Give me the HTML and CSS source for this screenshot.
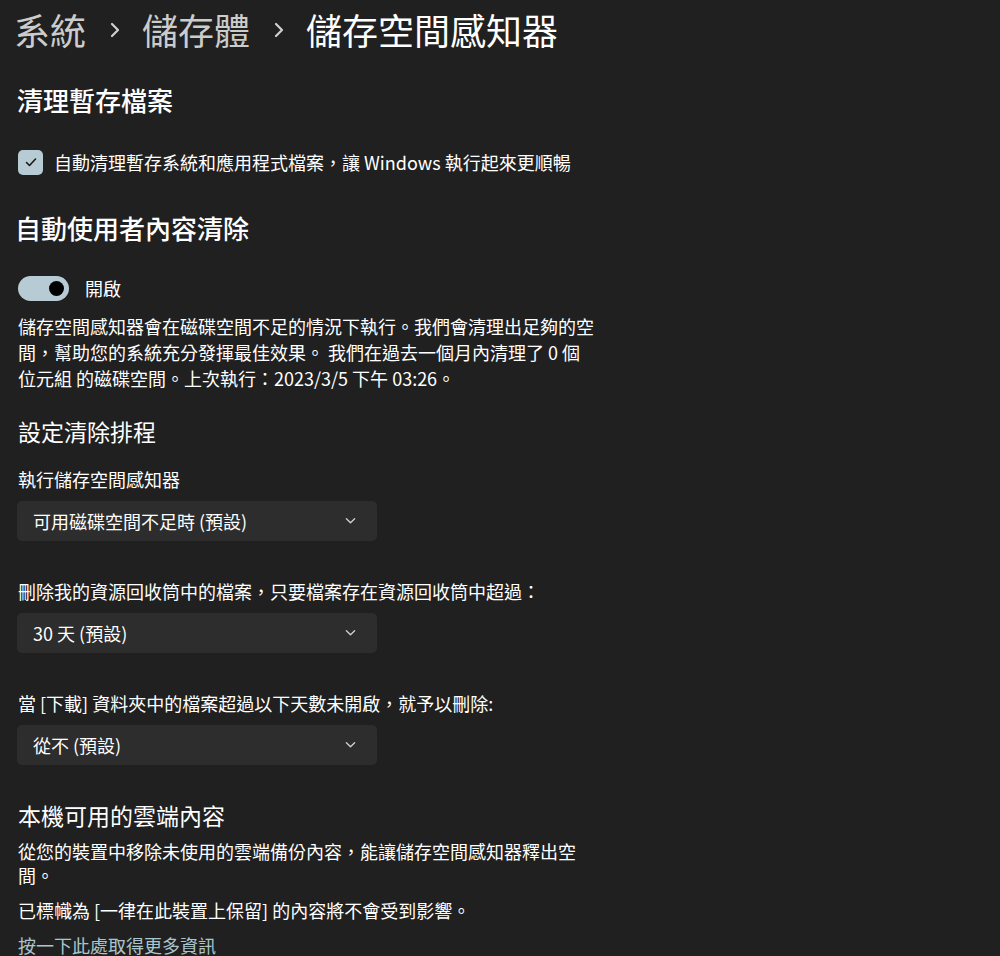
FILE: index.html
```html
<!DOCTYPE html>
<html lang="zh-Hant">
  <head>
    <meta charset="UTF-8" />
    <meta name="viewport" content="width=device-width, initial-scale=1.0"/>
    <title>儲存空間感知器</title>
    <link rel="stylesheet" href="styles.css">
  </head>
  <body>
    <div class="breadcrumb">
      <span class="crumb">系統</span>
      <svg class="sep" viewBox="0 0 10 18"><path d="M2 3 L8 9 L2 15" /></svg>
      <span class="crumb">儲存體</span>
      <svg class="sep" viewBox="0 0 10 18"><path d="M2 3 L8 9 L2 15" /></svg>
      <span class="crumb current">儲存空間感知器</span>
    </div>

    <h2 class="section first">清理暫存檔案</h2>
    <label class="check-row">
      <span class="checkbox">
        <svg viewBox="0 0 16 16"><path d="M3.5 8.5 L6.5 11.5 L12.5 5" /></svg>
      </span>
      自動清理暫存系統和應用程式檔案，讓 Windows 執行起來更順暢
    </label>

    <h2 class="section">自動使用者內容清除</h2>
    <div class="toggle-row">
      <span class="toggle"><span class="knob"></span></span>
      開啟
    </div>
    <p class="desc">儲存空間感知器會在磁碟空間不足的情況下執行。我們會清理出足夠的空間，幫助您的系統充分發揮最佳效果。 我們在過去一個月內清理了 0 個位元組 的磁碟空間。上次執行：2023/3/5 下午 03:26。</p>

    <h3 class="sub">設定清除排程</h3>

    <div class="field first">
      <div class="label">執行儲存空間感知器</div>
      <div class="select">
        <span>可用磁碟空間不足時 (預設)</span>
        <svg viewBox="0 0 12 8"><path d="M1.5 1.5 L6 6 L10.5 1.5" /></svg>
      </div>
    </div>

    <div class="field">
      <div class="label">刪除我的資源回收筒中的檔案，只要檔案存在資源回收筒中超過：</div>
      <div class="select">
        <span>30 天 (預設)</span>
        <svg viewBox="0 0 12 8"><path d="M1.5 1.5 L6 6 L10.5 1.5" /></svg>
      </div>
    </div>

    <div class="field">
      <div class="label">當 [下載] 資料夾中的檔案超過以下天數未開啟，就予以刪除:</div>
      <div class="select">
        <span>從不 (預設)</span>
        <svg viewBox="0 0 12 8"><path d="M1.5 1.5 L6 6 L10.5 1.5" /></svg>
      </div>
    </div>

    <h3 class="sub cloud">本機可用的雲端內容</h3>
    <p class="cloud-text">從您的裝置中移除未使用的雲端備份內容，能讓儲存空間感知器釋出空間。</p>
    <p class="cloud-text note">已標幟為 [一律在此裝置上保留] 的內容將不會受到影響。</p>
    <a class="more" href="#">按一下此處取得更多資訊</a>
  </body>
</html>
```

FILE: styles.css
```css
* {
  margin: 0;
  padding: 0;
  box-sizing: border-box;
}

body {
  background: #202020;
  color: #ffffff;
  font-family: "Noto Sans CJK TC", "Noto Sans", sans-serif;
  font-size: 18px;
  padding: 0 0 0 18px;
  overflow: hidden;
  height: 956px;
}

.breadcrumb {
  display: flex;
  align-items: center;
  height: 58px;
  margin-left: -4px;
  font-size: 36px;
  line-height: 58px;
}

.crumb {
  color: #cccccc;
}

.crumb.current {
  color: #ffffff;
}

.sep {
  width: 10px;
  height: 18px;
  margin: 2px 22px 0 24px;
}

.sep path {
  fill: none;
  stroke: #d0d0d0;
  stroke-width: 2.2;
  stroke-linecap: round;
  stroke-linejoin: round;
}

.section {
  font-size: 26px;
  font-weight: 500;
  line-height: 36px;
  margin-top: 33px;
  margin-left: -3px;
}

.section.first {
  margin-top: 24px;
  margin-left: -1px;
}

.check-row {
  display: flex;
  align-items: center;
  gap: 11px;
  height: 30px;
  margin-top: 29px;
  line-height: 30px;
}

.checkbox {
  width: 25px;
  height: 25px;
  border-radius: 5px;
  background: #b6cbd3;
  display: flex;
  align-items: center;
  justify-content: center;
}

.checkbox svg {
  width: 16px;
  height: 16px;
}

.checkbox path {
  fill: none;
  stroke: #1a1a1a;
  stroke-width: 1.6;
  stroke-linecap: round;
  stroke-linejoin: round;
}

.toggle-row {
  display: flex;
  align-items: center;
  gap: 16px;
  height: 30px;
  margin-top: 27px;
  line-height: 30px;
}

.toggle {
  width: 51px;
  height: 25px;
  border-radius: 13px;
  background: #b6cbd3;
  display: flex;
  align-items: center;
  justify-content: flex-end;
  padding-right: 5px;
}

.knob {
  width: 15px;
  height: 15px;
  border-radius: 50%;
  background: #000000;
}

.desc {
  max-width: 580px;
  line-height: 26px;
  margin-top: 10px;
}

.sub {
  font-size: 23px;
  font-weight: 400;
  line-height: 34px;
  margin-top: 23px;
}

.field {
  margin-top: 37px;
}

.field.first {
  margin-top: 18px;
}

.label {
  line-height: 26px;
}

.select {
  width: 360px;
  height: 40px;
  margin-top: 9px;
  margin-left: -1px;
  border-radius: 5px;
  background: #2d2d2d;
  display: flex;
  align-items: center;
  justify-content: space-between;
  padding: 0 21px 0 16px;
}

.select svg {
  width: 11px;
  height: 8px;
}

.select path {
  fill: none;
  stroke: #cfcfcf;
  stroke-width: 1.5;
  stroke-linecap: round;
  stroke-linejoin: round;
}

.sub.cloud {
  margin-top: 33px;
}

.cloud-text {
  max-width: 580px;
  line-height: 24px;
  margin-top: 7px;
}

.cloud-text.note {
  margin-top: 11px;
}

.more {
  display: block;
  margin-top: 11px;
  line-height: 24px;
  color: #a9c5ce;
  text-decoration: none;
}
```
